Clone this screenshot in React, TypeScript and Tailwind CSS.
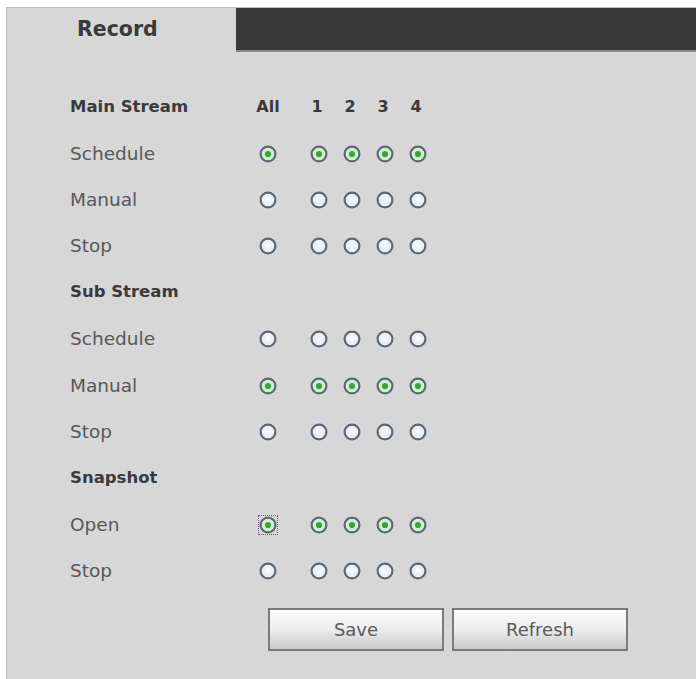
import React from "react";

type RowDef =
  | { kind: "header"; label: string; showCols?: boolean }
  | { kind: "row"; label: string; checked: boolean; focus?: boolean };

const rows: RowDef[] = [
  { kind: "header", label: "Main Stream", showCols: true },
  { kind: "row", label: "Schedule", checked: true },
  { kind: "row", label: "Manual", checked: false },
  { kind: "row", label: "Stop", checked: false },
  { kind: "header", label: "Sub Stream" },
  { kind: "row", label: "Schedule", checked: false },
  { kind: "row", label: "Manual", checked: true },
  { kind: "row", label: "Stop", checked: false },
  { kind: "header", label: "Snapshot" },
  { kind: "row", label: "Open", checked: true, focus: true },
  { kind: "row", label: "Stop", checked: false },
];

function Radio({ checked }: { checked: boolean }) {
  return (
    <svg width="18" height="18" viewBox="0 0 18 18">
      <defs>
        <radialGradient id="off" cx="50%" cy="45%" r="55%">
          <stop offset="0%" stopColor="#fbfcfd" />
          <stop offset="100%" stopColor="#dde3e8" />
        </radialGradient>
        <radialGradient id="on" cx="50%" cy="50%" r="55%">
          <stop offset="0%" stopColor="#e8fae8" />
          <stop offset="100%" stopColor="#b8e8b8" />
        </radialGradient>
      </defs>
      <circle cx="9" cy="9" r="7.4" fill={checked ? "url(#on)" : "url(#off)"} stroke="#5d6874" strokeWidth="2.2" />
      <circle cx="9" cy="9" r="5.6" fill="none" stroke={checked ? "#d4f3d4" : "#eef2f5"} strokeWidth="1" />
      {checked && <circle cx="9" cy="9" r="3.1" fill="#3aa63a" />}
    </svg>
  );
}

export default function App() {
  const font = { fontFamily: '"DejaVu Sans", Verdana, sans-serif' };
  return (
    <div className="w-[696px] h-[679px] bg-white pt-[7px] pl-[6px] overflow-hidden" style={font}>
      <div className="h-[672px] bg-[#d7d7d7] border-t border-l border-[#bdbdbd] flex flex-col">
        {/* tab bar */}
        <div className="flex h-[44px]">
          <div className="w-[229px] flex items-center pl-[70px] text-[20.5px] font-bold text-[#3a3a3a] pb-[1px]">
            Record
          </div>
          <div className="flex-1 bg-[#383838] border-b-[2px] border-[#8a8a8a]" />
        </div>

        <div className="mt-[32px] flex flex-col">
          {rows.map((r, i) => (
            <div key={i} className="h-[46.4px] flex items-center pl-[63px]">
              {r.kind === "header" ? (
                <>
                  <div className="w-[186px] text-[16.5px] font-bold text-[#3a3a3a]">{r.label}</div>
                  {r.showCols && (
                    <div className="flex items-center text-[16px] font-bold text-[#3a3a3a]">
                      <div className="w-[24px] text-center">All</div>
                      <div className="w-[22px]" />
                      {["1", "2", "3", "4"].map((n) => (
                        <div key={n} className="w-[33px] text-center pr-[3px]">
                          {n}
                        </div>
                      ))}
                    </div>
                  )}
                </>
              ) : (
                <>
                  <div className="w-[186px] text-[18.5px] text-[#575757]">{r.label}</div>
                  <div className="flex items-center">
                    <div className="w-[24px] flex justify-center">
                      <div className={r.focus ? "outline outline-1 outline-dotted outline-[#6a5d7a] flex" : "flex"}>
                        <Radio checked={r.checked} />
                      </div>
                    </div>
                    <div className="w-[22px]" />
                    {[0, 1, 2, 3].map((n) => (
                      <div key={n} className="w-[33px] flex justify-center">
                        <Radio checked={r.checked} />
                      </div>
                    ))}
                  </div>
                </>
              )}
            </div>
          ))}
        </div>

        <div className="mt-[14px] flex gap-[8px] pl-[261px]">
          {["Save", "Refresh"].map((t) => (
            <button
              key={t}
              className="w-[176px] h-[43px] border-2 border-[#7a7a7a] bg-gradient-to-b from-[#fbfbfb] via-[#ececec] to-[#c9c9c9] text-[18px] text-[#5a5a5a] flex items-center justify-center"
              style={font}
            >
              {t}
            </button>
          ))}
        </div>
      </div>
    </div>
  );
}
